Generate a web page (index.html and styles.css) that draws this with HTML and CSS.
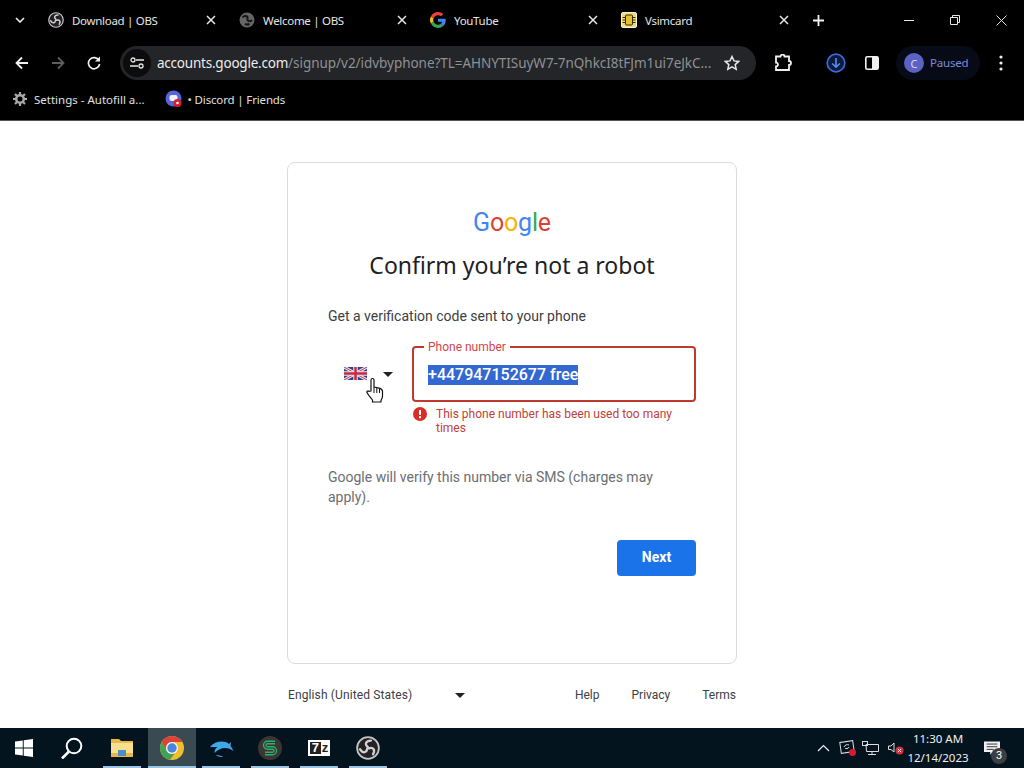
FILE: index.html
```html
<!DOCTYPE html>
<html lang="en">
<head>
<meta charset="utf-8">
<title>Google Account</title>
<link rel="stylesheet" href="styles.css">
</head>
<body>
<svg class="defs" width="0" height="0" aria-hidden="true">
  <defs>
    <symbol id="obs" viewBox="0 0 32 32">
      <circle cx="16" cy="16" r="14.500" fill="#242124" stroke="#c4c4c4" stroke-width="2.400"/>
      <g fill="none" stroke="#d2d2d2" stroke-width="3" stroke-linecap="round">
        <path d="M16 15C11 11 13 6 20 6"/>
        <path d="M16 15C11 11 13 6 20 6" transform="rotate(120 16 16)"/>
        <path d="M16 15C11 11 13 6 20 6" transform="rotate(240 16 16)"/>
      </g>
    </symbol>
    <symbol id="g" viewBox="0 0 48 48">
      <path fill="#EA4335" d="M24 9.500c3.500 0 6.700 1.300 9.100 3.500l6.800-6.800C35.800 2.400 30.300 0 24 0 14.600 0 6.500 5.400 2.600 13.200l7.900 6.200C12.400 13.600 17.700 9.500 24 9.500z"/>
      <path fill="#4285F4" d="M47 24.500c0-1.600-.1-3.100-.4-4.500H24v9h12.900c-.6 3-2.200 5.400-4.800 7.100l7.700 6C44.300 37.900 47 31.800 47 24.500z"/>
      <path fill="#FBBC05" d="M10.500 28.600c-.5-1.400-.8-3-.8-4.600s.3-3.200.8-4.600l-7.900-6.200C.9 16.500 0 20.100 0 24s.9 7.500 2.600 10.800z"/>
      <path fill="#34A853" d="M24 48c6.500 0 11.900-2.100 15.900-5.900l-7.700-6c-2.200 1.500-5 2.300-8.200 2.300-6.300 0-11.600-4.100-13.500-9.800l-7.900 6.200C6.500 42.600 14.600 48 24 48z"/>
    </symbol>
    <symbol id="x" viewBox="0 0 12 12"><path d="M2 2l8 8M10 2l-8 8" stroke="#e8e8e8" stroke-width="1.500" fill="none"/></symbol>
  </defs>
</svg>

<header class="chrome">
  <div class="tabstrip">
    <div class="tab-search"><svg width="10" height="6" viewBox="0 0 10 6"><path d="M1 1l4 4 4-4" fill="none" stroke="#eee" stroke-width="1.600"/></svg></div>
    <div class="tab"><svg class="fav"><use href="#obs"/></svg><span class="tab-title">Download | OBS</span><svg class="tab-x"><use href="#x"/></svg></div>
    <div class="tab"><svg class="fav" viewBox="0 0 16 16"><circle cx="8" cy="8" r="7.500" fill="#666"/><path d="M3.500 5.500C5.500 3 9 3.500 8.500 6.500S11 10 13 8M6 12c1.500.8 3 .8 4.500 0" fill="none" stroke="#161616" stroke-width="2"/></svg><span class="tab-title">Welcome | OBS</span><svg class="tab-x"><use href="#x"/></svg></div>
    <div class="tab"><svg class="fav"><use href="#g"/></svg><span class="tab-title">YouTube</span><svg class="tab-x"><use href="#x"/></svg></div>
    <div class="tab"><svg class="fav" viewBox="0 0 16 16"><rect x=".5" y=".5" width="15" height="15" rx="1.500" fill="#f0dc7a" stroke="#f5f1d8"/><rect x="4.500" y="3" width="7" height="10" rx="1" fill="#e5c234" stroke="#332b08"/><path d="M1.500 5.500h3M1.500 8h3M1.500 10.500h3M11.500 5.500h3M11.500 8h3M11.500 10.500h3" stroke="#332b08"/></svg><span class="tab-title">Vsimcard</span><svg class="tab-x"><use href="#x"/></svg></div>
    <div class="new-tab"><svg width="11" height="11" viewBox="0 0 11 11"><path d="M5.500 0v11M0 5.500h11" stroke="#f2f2f2" stroke-width="1.800"/></svg></div>
    <div class="win-controls">
      <div class="win-btn"><svg width="10" height="10" viewBox="0 0 10 10"><path d="M0 5.500h10" stroke="#e8e8e8"/></svg></div>
      <div class="win-btn"><svg width="10" height="10" viewBox="0 0 10 10"><path d="M.5 2.500h7v7h-7zM2.500 2.500v-2h7v7h-2" fill="none" stroke="#e8e8e8"/></svg></div>
      <div class="win-btn"><svg width="11" height="11" viewBox="0 0 11 11"><path d="M.5.500l10 10M10.500.500l-10 10" stroke="#e8e8e8"/></svg></div>
    </div>
  </div>
  <div class="toolbar">
    <div class="nav-btn first"><svg width="14" height="14" viewBox="0 0 14 14"><path d="M13 7H2M7 1.500L1.500 7 7 12.500" fill="none" stroke="#f0f0f0" stroke-width="1.800"/></svg></div>
    <div class="nav-btn"><svg width="14" height="14" viewBox="0 0 14 14"><path d="M1 7h11M7 1.500L12.500 7 7 12.500" fill="none" stroke="#5d5d5d" stroke-width="1.800"/></svg></div>
    <div class="nav-btn"><svg width="14" height="14" viewBox="0 0 14 14"><path d="M12 4.500A5.600 5.600 0 1 0 12.600 8" fill="none" stroke="#f0f0f0" stroke-width="1.700"/><path d="M13 .5v5H8z" fill="#f0f0f0"/></svg></div>
    <div class="omnibox">
      <div class="site-info"><svg width="14" height="12" viewBox="0 0 14 12"><path d="M6 3h8M0 9h8" stroke="#e8e8e8" stroke-width="1.500"/><circle cx="3" cy="3" r="2" fill="none" stroke="#e8e8e8" stroke-width="1.300"/><circle cx="11" cy="9" r="2" fill="none" stroke="#e8e8e8" stroke-width="1.300"/></svg></div>
      <div class="url"><span class="host">accounts.google.com</span><span class="path">/signup/v2/idvbyphone?TL=AHNYTISuyW7-7nQhkcI8tFJm1ui7eJkC...</span></div>
      <svg class="star" width="16" height="16" viewBox="0 0 16 16"><path d="M8 1.500l2 4.400 4.800.5-3.600 3.200 1 4.700L8 11.900l-4.200 2.400 1-4.700L1.200 6.400 6 5.900z" fill="none" stroke="#e8e8e8" stroke-width="1.500"/></svg>
    </div>
    <svg class="ext" width="18" height="18" viewBox="0 0 18 18"><path d="M2 2.500h4.500a2 2 0 0 1 4 0H15V7a2 2 0 0 1 0 4v5H2v-3.500a2 2 0 0 0 0-4z" fill="none" stroke="#f0f0f0" stroke-width="1.800"/></svg>
    <svg class="dl" width="20" height="20" viewBox="0 0 20 20"><circle cx="10" cy="10" r="8.800" fill="#0b1a3a" stroke="#3b68d6" stroke-width="1.700"/><path d="M10 5v9M6.200 10.500L10 14.200l3.800-3.700" fill="none" stroke="#5d8cf0" stroke-width="1.600"/></svg>
    <svg class="side" width="14" height="14" viewBox="0 0 14 14"><rect x=".8" y=".8" width="12.400" height="12.400" rx="1.500" fill="none" stroke="#f2f2f2" stroke-width="1.600"/><rect x="7" y="1" width="6" height="12" fill="#f2f2f2"/></svg>
    <div class="profile"><span class="avatar">C</span><span class="paused">Paused</span></div>
    <svg class="menu" width="4" height="16" viewBox="0 0 4 16"><circle cx="2" cy="2" r="1.600" fill="#f0f0f0"/><circle cx="2" cy="8" r="1.600" fill="#f0f0f0"/><circle cx="2" cy="14" r="1.600" fill="#f0f0f0"/></svg>
  </div>
  <div class="bookmarks">
    <div class="bookmark"><svg width="14" height="14" viewBox="0 0 14 14"><circle cx="7" cy="7" r="3.800" fill="none" stroke="#a8a8a8" stroke-width="2.600"/><path d="M7 0v3M7 11v3M0 7h3M11 7h3M2 2l2 2M10 10l2 2M12 2l-2 2M4 10l-2 2" stroke="#a8a8a8" stroke-width="2.200"/></svg><span>Settings - Autofill a...</span></div>
    <div class="bookmark second"><svg width="18" height="18" viewBox="0 0 18 18"><circle cx="8.500" cy="8.500" r="8" fill="#5865d8"/><rect x="4.500" y="5" width="8" height="6" rx="2" fill="#f0f0f8"/><circle cx="12.500" cy="13" r="4" fill="#d81e2a"/><circle cx="12.500" cy="13" r="1.300" fill="#fff"/></svg><span>• Discord | Friends</span></div>
  </div>
</header>

<main class="page">
  <section class="card">
    <div class="logo" aria-label="Google"><span class="b">G</span><span class="r">o</span><span class="y">o</span><span class="b">g</span><span class="gr">l</span><span class="r">e</span></div>
    <h1 class="title">Confirm you’re not a robot</h1>
    <p class="sub">Get a verification code sent to your phone</p>
    <div class="phone-row">
      <div class="country">
        <svg class="flag" width="23" height="13" viewBox="0 0 23 13"><rect width="23" height="13" fill="#2f3f8f"/><path d="M0 0l23 13M23 0L0 13" stroke="#e8e8f0" stroke-width="3"/><path d="M0 0l23 13M23 0L0 13" stroke="#c9354a" stroke-width="1"/><path d="M11.500 0v13M0 6.500h23" stroke="#e8e8f0" stroke-width="4.500"/><path d="M11.500 0v13M0 6.500h23" stroke="#c9283e" stroke-width="2.500"/></svg>
        <span class="caret"></span>
        <svg class="hand" width="18" height="26" viewBox="0 0 18 26"><path d="M5 14V3a1.500 1.500 0 0 1 3 0v7l5 1.200c2 .5 3.500 1.300 3.500 3.300v4.500c0 2-.8 3-1.500 4.500v1.500H6.500V23C5 21 2.500 18.500 1 15.500c-.5-1 .8-2 1.800-1.200z" fill="#fff" stroke="#111" stroke-width="1.200" stroke-linejoin="round"/><path d="M8 10v6M10.800 11v5M13.500 12v4" stroke="#111" stroke-width="1"/></svg>
      </div>
      <div class="phone-col">
        <div class="field">
          <label class="field-label">Phone number</label>
          <span class="field-value">+447947152677 free</span>
        </div>
        <div class="error">
          <svg width="14" height="14" viewBox="0 0 14 14"><circle cx="7" cy="7" r="7" fill="#d62f26"/><rect x="6" y="3" width="2" height="5" fill="#fff"/><rect x="6" y="9.200" width="2" height="2" fill="#fff"/></svg>
          <span>This phone number has been used too many times</span>
        </div>
      </div>
    </div>
    <p class="note">Google will verify this number via SMS (charges may apply).</p>
    <div class="actions"><button class="next" type="button">Next</button></div>
  </section>
  <footer class="foot">
    <div class="lang"><span>English (United States)</span><span class="caret"></span></div>
    <nav class="links"><a>Help</a><a>Privacy</a><a>Terms</a></nav>
  </footer>
</main>

<footer class="taskbar">
  <div class="task-left">
    <div class="task-item"><svg width="18" height="18" viewBox="0 0 18 18"><path d="M0 2.500l7.800-1.100v7.200H0zM8.700 1.300L18 0v8.600H8.700zM0 9.500h7.800v7.100L0 15.500zM8.700 9.500H18V18l-9.300-1.300z" fill="#fff"/></svg></div>
    <div class="task-item"><svg width="22" height="22" viewBox="0 0 22 22"><circle cx="13" cy="9" r="7.300" fill="none" stroke="#fff" stroke-width="2"/><path d="M8 14.500L1 21.500" stroke="#fff" stroke-width="2.600"/></svg></div>
    <div class="task-item running"><svg width="22" height="18" viewBox="0 0 22 18"><path d="M0 0h8l2 2h12v15H0z" fill="#e9b94e"/><rect y="4" width="22" height="13" fill="#f9df8e"/><rect y="14" width="22" height="4" fill="#e6b84a"/><rect x="7" y="11" width="8" height="6" fill="#4a8fc8"/></svg></div>
    <div class="task-item running active"><svg width="24" height="24" viewBox="0 0 24 24"><circle cx="12" cy="12" r="12" fill="#f2bd2c"/><path d="M12 0a12 12 0 0 1 10.390 6H12a6 6 0 0 0-5.200 9L1.610 6A12 12 0 0 1 12 0z" fill="#d8433a"/><path d="M1.610 6L6.800 15a6 6 0 0 0 8.200 2.200L9.900 23.800A12 12 0 0 1 1.610 6z" fill="#3ea356"/><circle cx="12" cy="12" r="6" fill="#f4f4f4"/><circle cx="12" cy="12" r="4.700" fill="#4a84e0"/></svg></div>
    <div class="task-item running"><svg width="25" height="17" viewBox="0 0 25 17"><path d="M1 7C6 1 15 0 20 4l2-2-.5 4c1 1 2 3 3 5-3-2-5-3-8-3-5 0-8 2-11 5 0-3 1-5 3-6-3 0-5 0-7.500 0z" fill="#3fa9e8"/><path d="M7 15c3 0 6 1 7 2-3 0-6-.5-7-2z" fill="#3fa9e8"/></svg></div>
    <div class="task-item running"><svg width="24" height="24" viewBox="0 0 24 24"><circle cx="12" cy="12" r="12" fill="#3a3733"/><path d="M17 6.500H9.500a2.700 2.700 0 0 0 0 5.500h5a2.700 2.700 0 0 1 0 5.500H7" fill="none" stroke="#2fae70" stroke-width="3.800"/><path d="M17 6.500H9.500a2.700 2.700 0 0 0 0 5.500h5a2.700 2.700 0 0 1 0 5.500H7" fill="none" stroke="#3a3733" stroke-width="1.200"/></svg></div>
    <div class="task-item running"><div class="zip"><span class="seven">7</span><span>z</span></div></div>
    <div class="task-item running"><svg width="24" height="24"><use href="#obs"/></svg></div>
  </div>
  <div class="tray">
    <svg class="chev" width="13" height="8" viewBox="0 0 13 8"><path d="M1 7l5.500-5.500L12 7" fill="none" stroke="#eee" stroke-width="1.200"/></svg>
    <svg class="t-ic ic-a" width="18" height="18" viewBox="0 0 18 18"><rect x="1.500" y="2.500" width="13" height="11" fill="none" stroke="#ddd" transform="rotate(-8 8 8)"/><path d="M5 8c1-2 3-3 5-2M10 8c-1 2-3 2-4 1" stroke="#ddd" fill="none"/><circle cx="13.500" cy="13.500" r="3.500" fill="#e0182d"/></svg>
    <svg class="t-ic ic-b" width="17" height="16" viewBox="0 0 17 16"><rect x=".5" y="1.500" width="5" height="4" fill="none" stroke="#ddd"/><path d="M4 4.500h12.500v7h-12zM10 11.500V14M6 14.500h8" fill="none" stroke="#ddd"/></svg>
    <svg class="t-ic ic-c" width="16" height="14" viewBox="0 0 16 14"><path d="M.5 5h2.500L6 2v9L3 8.500H.5z" fill="none" stroke="#ddd"/><circle cx="11.500" cy="9.500" r="4" fill="#d5303e"/><path d="M10 8l3 3M13 8l-3 3" stroke="#eee"/></svg>
    <div class="clock"><span>11:30 AM</span><span>12/14/2023</span></div>
    <div class="notif">
      <svg width="16" height="15" viewBox="0 0 18 16"><path d="M0 0h18v12h-8l-3 3v-3H0z" fill="#f0f0f0"/><path d="M3 3h12M3 6h12M3 9h8" stroke="#222"/></svg>
      <span class="badge">3</span>
    </div>
  </div>
</footer>
</body>
</html>
```
FILE: styles.css
```css
* { box-sizing: border-box; }
html, body { margin: 0; height: 768px; overflow: hidden; background: #fff; }
body { display: flex; flex-direction: column; font-family: Roboto, "Liberation Sans", sans-serif; color: #202124; }
.defs { position: absolute; }

.chrome { background: #000; height: 121px; border-bottom: 1px solid #55585a; flex: none; font-family: "Noto Sans", "Open Sans", sans-serif; color: #e8e8e8; }

.tabstrip { display: flex; align-items: center; height: 42px; padding-bottom: 2px; }
.tab-search { width: 39px; padding-left: 15px; display: flex; align-items: center; }
.tab { width: 191px; padding: 0 13px 0 9px; display: flex; align-items: center; gap: 8px; font-size: 11.5px; letter-spacing: -.3px; }
.fav { width: 16px; height: 16px; flex: none; }
.tab-title { flex: 1; white-space: nowrap; color: #e4e4e4; }
.tab-x { width: 12px; height: 12px; flex: none; }
.new-tab { margin-left: 10px; display: flex; }
.win-controls { margin-left: auto; display: flex; }
.win-btn { width: 46px; height: 40px; display: flex; align-items: center; justify-content: center; }

.toolbar { display: flex; align-items: center; height: 42px; }
.nav-btn { width: 36px; display: flex; justify-content: center; }
.nav-btn.first { margin-left: 4px; }
.omnibox { margin-left: 8px; width: 636px; height: 34px; border-radius: 17px; background: #232528; display: flex; align-items: center; }
.site-info { width: 28px; height: 28px; margin-left: 3px; border-radius: 50%; background: #0c0c0d; display: flex; align-items: center; justify-content: center; flex: none; }
.url { margin-left: 6px; font-size: 13.5px; white-space: nowrap; overflow: hidden; flex: 1; letter-spacing: -.22px; }
.host { color: #ececec; }
.path { color: #8f9194; letter-spacing: -.04px; }
.star { margin: 0 16px 0 9px; flex: none; }
.ext { margin-left: 18px; flex: none; }
.dl { margin-left: 34px; flex: none; }
.side { margin-left: 19px; flex: none; }
.profile { margin-left: 17px; width: 84px; height: 34px; border-radius: 17px; background: #070b17; display: flex; align-items: center; padding-left: 8px; gap: 6px; font-size: 11.5px; letter-spacing: -.2px; flex: none; }
.avatar { width: 20px; height: 20px; border-radius: 50%; background: #5a62c4; color: #d8dcf6; display: flex; align-items: center; justify-content: center; font-size: 11px; }
.paused { color: #7f8cd8; padding-bottom: 1px; }
.menu { margin-left: 19px; flex: none; }

.bookmarks { display: flex; align-items: center; height: 32px; padding: 0 0 2px 13px; font-size: 11.5px; }
.bookmark { display: flex; align-items: center; gap: 7px; white-space: nowrap; color: #e0e0e0; }
.bookmark.second { margin-left: 20px; gap: 5px; letter-spacing: -.15px; }

.page { flex: 1; display: flex; flex-direction: column; align-items: center; padding-top: 41px; min-height: 0; }
.card { width: 450px; height: 502px; border: 1px solid #dadce0; border-radius: 8px; padding: 46px 40px 0; display: flex; flex-direction: column; flex: none; }
.logo { text-align: center; font-family: Roboto, sans-serif; font-weight: 400; font-size: 25px; line-height: 28px; letter-spacing: -.2px; }
.logo .b { color: #4285f4; } .logo .r { color: #d9443a; } .logo .y { color: #f4b400; } .logo .gr { color: #34a853; }
.title { margin: 12px 0 0; text-align: center; font-family: "Noto Sans", sans-serif; font-weight: 400; font-size: 23px; line-height: 32px; color: #202124; }
.sub { margin: 25px 0 0; font-size: 14px; line-height: 20px; color: #3c4043; }
.phone-row { display: flex; margin-top: 20px; }
.country { position: relative; width: 84px; display: flex; align-items: flex-start; padding: 21px 0 0 16px; flex: none; }
.flag { flex: none; }
.caret { width: 0; height: 0; border-left: 5px solid transparent; border-right: 5px solid transparent; border-top: 5px solid #202124; display: block; flex: none; }
.country .caret { margin: 5px 0 0 16px; }
.hand { position: absolute; left: 38px; top: 31px; }
.phone-col { flex: 1; min-width: 0; }
.field { position: relative; height: 56px; border: 2px solid #c0392e; border-radius: 4px; display: flex; align-items: center; padding: 1px 14px 0; }
.field-label { position: absolute; left: 10px; top: -8px; padding: 0 4px; background: #fff; font-size: 12px; line-height: 14px; color: #d6434a; }
.field-value { font-size: 16px; line-height: 20px; font-weight: 500; color: #fff; background: #3367d1; white-space: nowrap; }
.error { display: flex; gap: 9px; margin: 5px 0 0 1px; font-size: 12px; line-height: 14px; color: #c0413a; }
.error svg { flex: none; }
.error span { width: 250px; }
.note { margin: 32px 0 0; font-size: 14px; line-height: 20px; color: #6b6e72; }
.actions { display: flex; justify-content: flex-end; margin-top: 33px; }
.next { width: 79px; height: 36px; padding: 0 0 2px; border: 0; border-radius: 4px; background: #1a73e8; color: #fff; font-family: Roboto, sans-serif; font-size: 14px; font-weight: 700; }
.foot { width: 448px; margin-top: 24px; display: flex; justify-content: space-between; align-items: center; font-size: 12px; line-height: 14px; color: #3c4043; }
.lang { display: flex; align-items: center; width: 177px; justify-content: space-between; letter-spacing: .12px; }
.links { display: flex; gap: 32px; }

.taskbar { flex: none; height: 40px; background: #03141f; display: flex; justify-content: space-between; color: #f0f0f0; }
.task-left { display: flex; }
.task-item { width: 48px; height: 40px; margin-right: 1px; display: flex; align-items: center; justify-content: center; position: relative; }
.task-item:first-child { margin-right: 0; }
.task-item:nth-child(2) { margin-right: 2px; }
.task-item:nth-child(3) { margin-right: 2px; }
.task-item.running::after { content: ""; position: absolute; left: 5px; right: 5px; bottom: 0; height: 2px; background: #99c4e4; }
.task-item.active { background: #3a4a53; }
.task-item.active::after { left: 0; right: 0; }
.zip { width: 22px; height: 16px; background: #fff; display: flex; align-items: center; justify-content: center; font: 700 13px/16px "Liberation Sans", sans-serif; color: #222; }
.seven { background: #222; color: #fff; width: 11px; height: 12px; line-height: 12px; text-align: center; margin-right: 1px; }
.tray { display: flex; align-items: center; }
.chev { margin-right: 9px; }
.t-ic { flex: none; }
.ic-a { margin-right: 5px; }
.ic-b { margin-right: 9px; }
.ic-c { margin-right: 2px; }
.clock { display: flex; flex-direction: column; align-items: center; width: 64px; font-family: "Noto Sans", sans-serif; font-size: 11.5px; line-height: 19px; }
.notif { position: relative; width: 50px; display: flex; justify-content: center; margin-left: 4px; padding-right: 14px; }
.badge { position: absolute; left: 17px; top: 7px; width: 16px; height: 16px; border-radius: 50%; background: #3c3f42; font-size: 11px; line-height: 16px; text-align: center; color: #fff; }
```
